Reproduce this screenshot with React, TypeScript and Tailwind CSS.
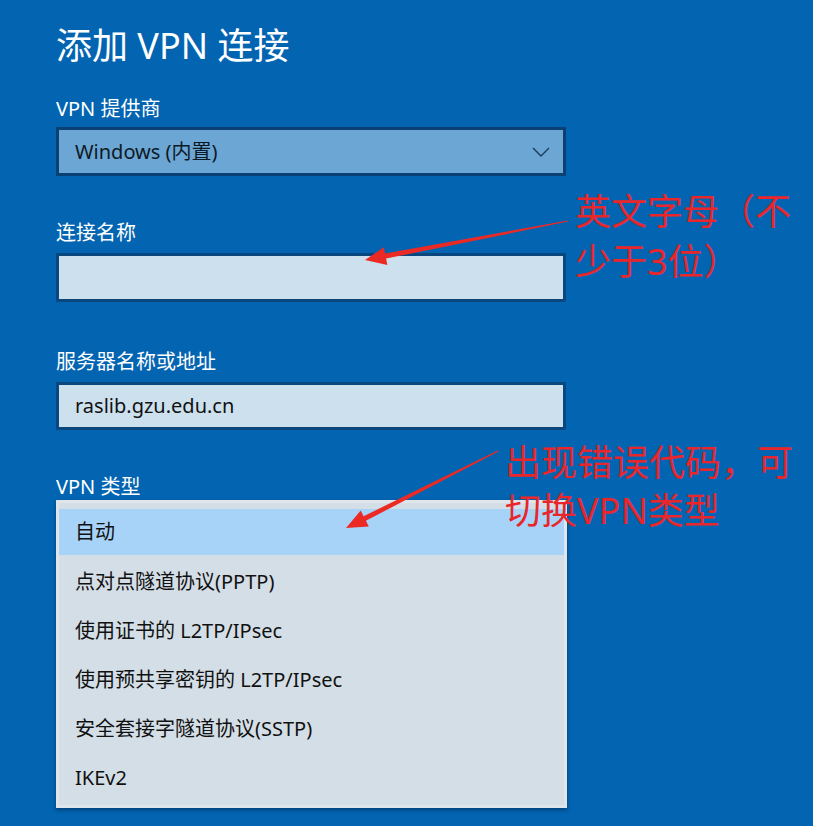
import React from "react";

const FONT = '"Noto Sans", "Noto Sans CJK SC", sans-serif';

function arrowPoints(tx: number, ty: number, hx: number, hy: number, headLen: number, headHalf: number, tailHalf: number, shaftHalf: number) {
  const dx = hx - tx;
  const dy = hy - ty;
  const len = Math.hypot(dx, dy);
  const ux = dx / len;
  const uy = dy / len;
  const nx = -uy;
  const ny = ux;
  const bx = hx - ux * headLen;
  const by = hy - uy * headLen;
  const pts = [
    [tx + nx * tailHalf, ty + ny * tailHalf],
    [bx + nx * shaftHalf, by + ny * shaftHalf],
    [bx + nx * headHalf, by + ny * headHalf],
    [hx, hy],
    [bx - nx * headHalf, by - ny * headHalf],
    [bx - nx * shaftHalf, by - ny * shaftHalf],
    [tx - nx * tailHalf, ty - ny * tailHalf],
  ];
  return pts.map((p) => `${p[0].toFixed(1)},${p[1].toFixed(1)}`).join(" ");
}

const items = [
  "点对点隧道协议(PPTP)",
  "使用证书的 L2TP/IPsec",
  "使用预共享密钥的 L2TP/IPsec",
  "安全套接字隧道协议(SSTP)",
  "IKEv2",
];

export default function App() {
  return (
    <div
      className="relative w-[813px] h-[826px] overflow-hidden bg-[#0364b1] text-white"
      style={{ fontFamily: FONT }}
    >
      <div className="flex flex-col pl-[56px] pt-[22px]">
        <div className="h-[48px] leading-[48px] text-[36px] font-normal text-white">添加 VPN 连接</div>

        <div className="mt-[27px] h-[24px] leading-[24px] text-[20px] text-white">VPN 提供商</div>
        <div className="mt-[6px] flex h-[49px] w-[510px] items-center justify-between border-[3px] border-[#0b4075] bg-[#6ca6d4] pl-[16px] pr-[13px]">
          <span className="text-[20px] text-[#0d1a26]">Windows (内置)</span>
          <svg width="18" height="10" viewBox="0 0 18 10" fill="none">
            <polyline points="1,1 9,9 17,1" stroke="#1d3b58" strokeWidth="1.4" />
          </svg>
        </div>

        <div className="mt-[45px] h-[24px] leading-[24px] text-[20px] text-white">连接名称</div>
        <div className="mt-[8px] h-[49px] w-[510px] border-[3px] border-[#0a477f] bg-[#cde0ee]" />

        <div className="mt-[48px] h-[24px] leading-[24px] text-[20px] text-white">服务器名称或地址</div>
        <div className="mt-[8px] flex h-[48px] w-[510px] items-center border-[3px] border-[#0a477f] bg-[#cde0ee] pl-[16px]">
          <span className="text-[20px] text-[#111111]">raslib.gzu.edu.cn</span>
        </div>

        <div className="mt-[45px] h-[24px] leading-[24px] text-[20px] text-white">VPN 类型</div>
        <div className="relative z-10 mt-[1px] flex w-[511px] flex-col border-[3px] border-[#dfe5ea] bg-[#d4dee6] pt-[5px] pb-[3px] shadow-[0_2px_4px_rgba(0,20,50,0.45)]">
          <div className="mt-[1px] mb-[2px] flex h-[46px] items-center bg-[#a7d3f8] pl-[16px] text-[20px] text-[#111111]">
            自动
          </div>
          {items.map((t) => (
            <div key={t} className="flex h-[49px] items-center pl-[16px] text-[20px] text-[#111111]">
              {t}
            </div>
          ))}
        </div>
      </div>

      <div className="absolute z-20 left-[575px] top-[187px] text-[36px] leading-[50px] text-[#e8262b]">
        <div>英文字母（不</div>
        <div>少于3位）</div>
      </div>

      <div className="absolute z-20 left-[505px] top-[439px] text-[36px] leading-[48px] text-[#e8262b]">
        <div>出现错误代码，可</div>
        <div>切换VPN类型</div>
      </div>

      <svg className="pointer-events-none absolute left-0 top-0 z-30" width="813" height="826">
        <polygon points={arrowPoints(568, 221, 365, 260, 21, 9, 0.6, 2.6)} fill="#ec2a25" />
        <polygon points={arrowPoints(498, 451, 346, 528, 21, 9, 0.6, 2.6)} fill="#ec2a25" />
      </svg>
    </div>
  );
}
